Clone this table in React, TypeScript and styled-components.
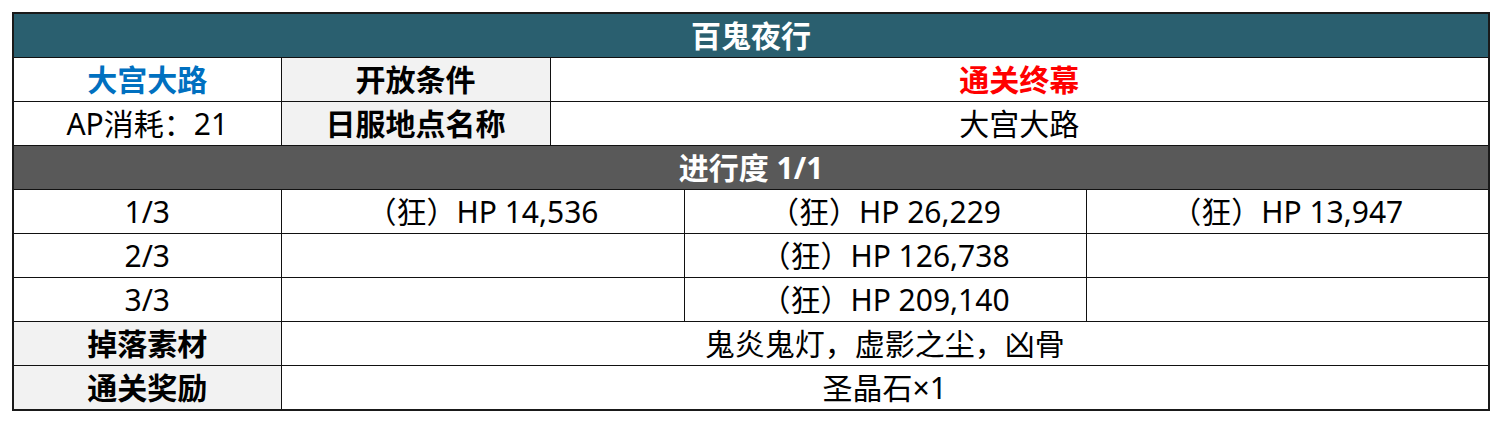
import * as React from "react";
import styled, { createGlobalStyle } from "styled-components";

const GlobalStyle = createGlobalStyle`
  html, body {
    margin: 0;
    padding: 0;
    background: #ffffff;
  }
  body {
    font-family: "Noto Sans", "Noto Sans CJK SC", sans-serif;
  }
`;

const Page = styled.div`
  padding: 12px 0 0 12px;
`;

const Table = styled.table`
  width: 1476px;
  table-layout: fixed;
  border-collapse: collapse;
  border: 2px solid #1a1a1a;
  font-size: 30px;
  color: #000;
`;

const Row = styled.tr`
  height: 44px;
`;

type Tone = "plain" | "label" | "title" | "section";

const Cell = styled.td<{ $tone?: Tone; $color?: string; $bold?: boolean }>`
  border: 1px solid #111;
  padding: 0;
  height: 43px;
  text-align: center;
  vertical-align: middle;
  line-height: 1;
  white-space: nowrap;
  overflow: hidden;
  font-weight: ${(p) => (p.$bold || p.$tone === "label" || p.$tone === "title" || p.$tone === "section" ? 700 : 400)};
  color: ${(p) => p.$color ?? (p.$tone === "title" || p.$tone === "section" ? "#ffffff" : "#000000")};
  background: ${(p) =>
    p.$tone === "title"
      ? "#2a5f6f"
      : p.$tone === "section"
      ? "#595959"
      : p.$tone === "label"
      ? "#f2f2f2"
      : "#ffffff"};
`;

const waves = [
  { wave: "1/3", enemies: ["（狂）HP 14,536", "（狂）HP 26,229", "（狂）HP 13,947"] },
  { wave: "2/3", enemies: ["", "（狂）HP 126,738", ""] },
  { wave: "3/3", enemies: ["", "（狂）HP 209,140", ""] },
];

export default function App() {
  return (
    <Page>
      <GlobalStyle />
      <Table>
        <colgroup>
          <col style={{ width: 268 }} />
          <col style={{ width: 269 }} />
          <col style={{ width: 134 }} />
          <col style={{ width: 402 }} />
          <col style={{ width: 403 }} />
        </colgroup>
        <tbody>
          <Row>
            <Cell $tone="title" colSpan={5}>百鬼夜行</Cell>
          </Row>
          <Row>
            <Cell $bold $color="#0070c0">大宫大路</Cell>
            <Cell $tone="label">开放条件</Cell>
            <Cell $bold $color="#ff0000" colSpan={3}>通关终幕</Cell>
          </Row>
          <Row>
            <Cell>AP消耗：21</Cell>
            <Cell $tone="label">日服地点名称</Cell>
            <Cell colSpan={3}>大宫大路</Cell>
          </Row>
          <Row>
            <Cell $tone="section" colSpan={5}>进行度 1/1</Cell>
          </Row>
          {waves.map((w) => (
            <Row key={w.wave}>
              <Cell>{w.wave}</Cell>
              <Cell colSpan={2}>{w.enemies[0]}</Cell>
              <Cell>{w.enemies[1]}</Cell>
              <Cell>{w.enemies[2]}</Cell>
            </Row>
          ))}
          <Row>
            <Cell $tone="label">掉落素材</Cell>
            <Cell colSpan={4}>鬼炎鬼灯，虚影之尘，凶骨</Cell>
          </Row>
          <Row>
            <Cell $tone="label">通关奖励</Cell>
            <Cell colSpan={4}>圣晶石×1</Cell>
          </Row>
        </tbody>
      </Table>
    </Page>
  );
}
